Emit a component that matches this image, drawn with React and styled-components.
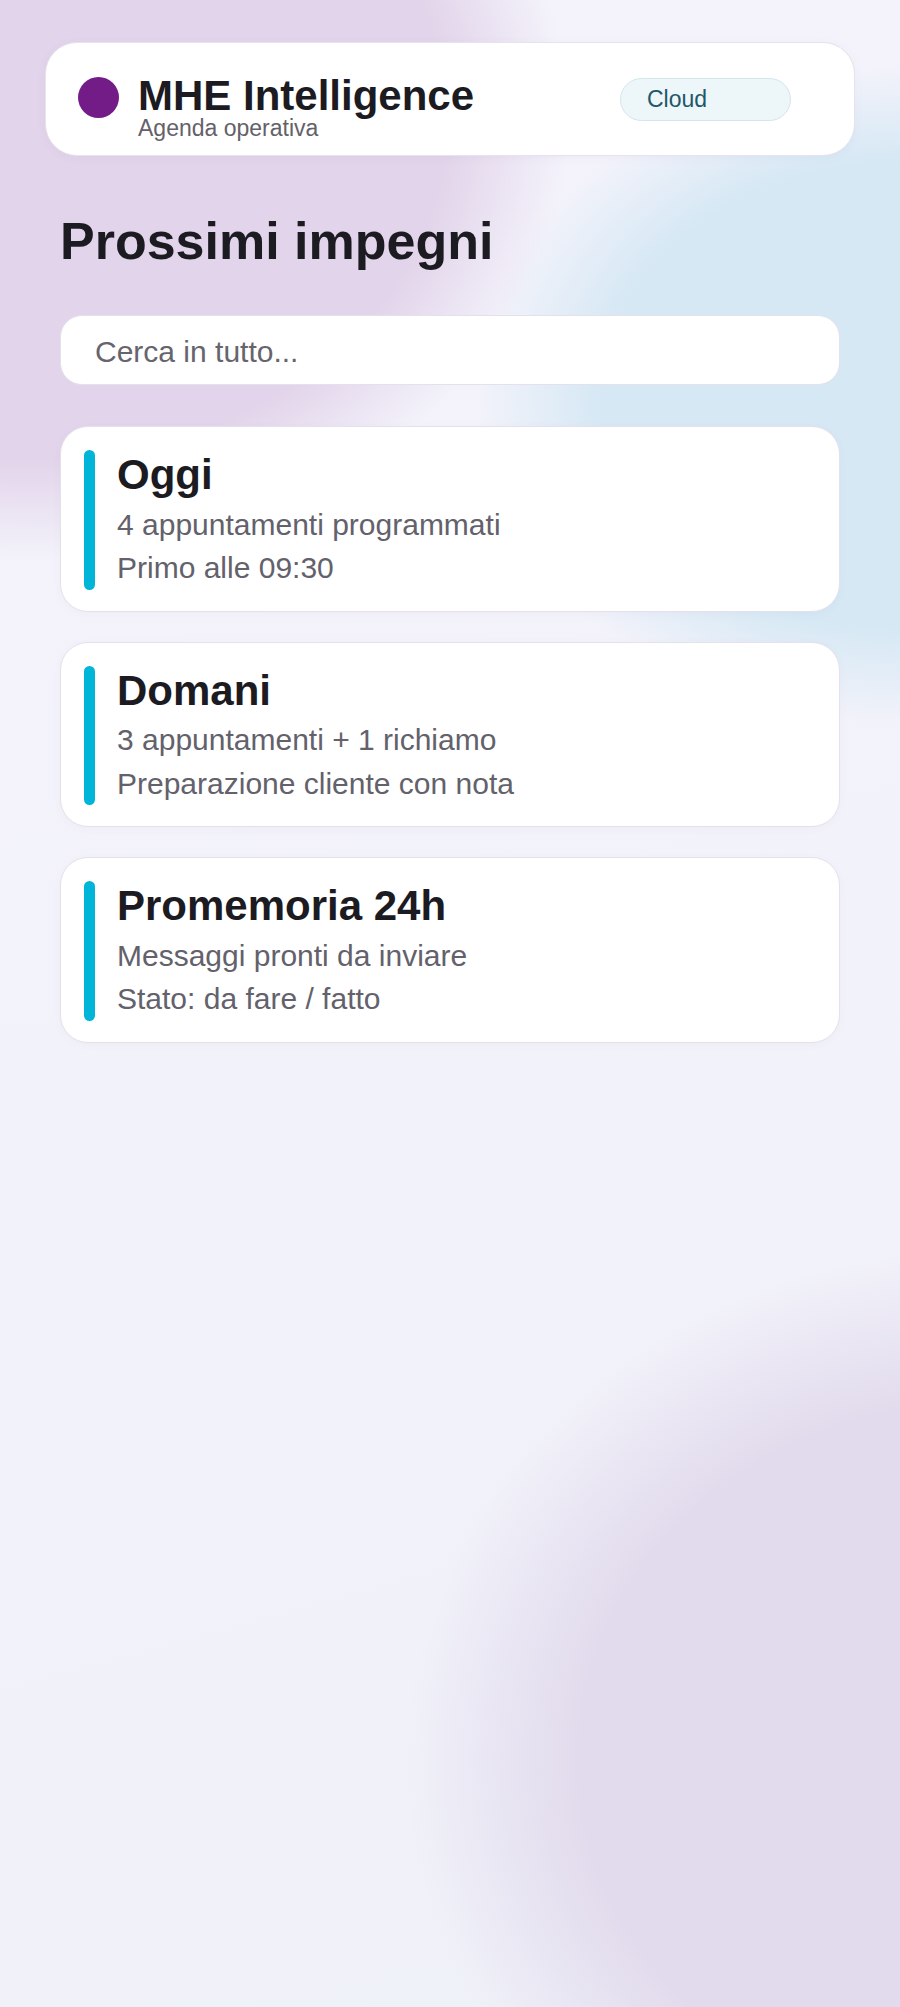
import React from "react";
import styled, { createGlobalStyle } from "styled-components";

const Global = createGlobalStyle`
  html, body { margin: 0; padding: 0; }
  body { font-family: "Liberation Sans", Arial, sans-serif; background: #f2f2fa; }
  * { box-sizing: border-box; }
`;

const Page = styled.div`
  min-height: 2007px;
  padding: 42px 45px 60px;
  background:
    radial-gradient(ellipse 540px 440px at 30px 120px, rgba(226, 212, 234, 1) 0%, rgba(226, 212, 234, 1) 77%, rgba(226, 212, 234, 0) 100%),
    radial-gradient(ellipse 430px 330px at 905px 395px, rgba(213, 232, 244, 1) 0%, rgba(213, 232, 244, 1) 70%, rgba(213, 232, 244, 0) 100%),
    radial-gradient(ellipse 580px 510px at 985px 1760px, rgba(226, 219, 237, 1) 0%, rgba(226, 219, 237, 1) 70%, rgba(226, 219, 237, 0) 100%),
    linear-gradient(165deg, #f4f3fb 0%, #f2f2fa 60%, #eff1f8 100%);
`;

const Header = styled.header`
  display: flex;
  align-items: flex-start;
  height: 114px;
  padding: 32px 63px 10px 32px;
  background: #ffffff;
  border: 1px solid #e6e2ee;
  border-radius: 32px;
  box-shadow: 0 2px 10px rgba(120, 100, 150, 0.05);
`;

const Brand = styled.div`
  display: flex;
  align-items: flex-start;
  gap: 19px;
`;

const Dot = styled.span`
  width: 41px;
  height: 41px;
  margin-top: 2px;
  border-radius: 50%;
  background: #731b86;
  flex: none;
`;

const BrandText = styled.div`
  display: flex;
  flex-direction: column;
`;

const BrandName = styled.div`
  font-size: 42px;
  line-height: 1;
  font-weight: 700;
  color: #1c1b22;
`;

const BrandSub = styled.div`
  margin-top: -2px;
  font-size: 23px;
  line-height: 1.2;
  color: #636169;
`;

const Pill = styled.span`
  margin-left: auto;
  margin-top: 3px;
  width: 171px;
  height: 43px;
  display: flex;
  align-items: center;
  padding-left: 26px;
  font-size: 23px;
  color: #1f5868;
  background: #edf6f9;
  border: 1px solid #d3e6ed;
  border-radius: 22px;
`;

const Main = styled.main`
  padding: 0 15px;
  display: flex;
  flex-direction: column;
`;

const Title = styled.h1`
  margin: 54px 0 0;
  font-size: 52px;
  line-height: 1.2;
  font-weight: 700;
  color: #1c1b22;
`;

const Search = styled.input`
  margin-top: 43px;
  height: 70px;
  width: 100%;
  padding: 4px 34px 0;
  font-family: "Liberation Sans", Arial, sans-serif;
  font-size: 30px;
  color: #1c1b22;
  background: #ffffff;
  border: 1px solid #e4e0ec;
  border-radius: 22px;
  outline: none;
  &::placeholder { color: #66646d; }
`;

const List = styled.div`
  margin-top: 41px;
  display: flex;
  flex-direction: column;
  gap: 30px;
`;

const Card = styled.div`
  display: flex;
  gap: 22px;
  padding: 23px 23px 21px;
  background: #ffffff;
  border: 1px solid #e4e0ec;
  border-radius: 28px;
  box-shadow: 0 2px 8px rgba(120, 100, 150, 0.04);
`;

const Accent = styled.span`
  width: 11px;
  flex: none;
  border-radius: 6px;
  background: ${(p) => p.$color || "#00b5d8"};
`;

const CardBody = styled.div`
  display: flex;
  flex-direction: column;
`;

const CardTitle = styled.div`
  font-size: 42px;
  line-height: 1.2;
  font-weight: 700;
  color: #1c1b22;
  margin-bottom: 2px;
`;

const CardLine = styled.div`
  font-size: 30px;
  line-height: 1.45;
  color: #63616b;
`;

const items = [
  { title: "Oggi", lines: ["4 appuntamenti programmati", "Primo alle 09:30"] },
  { title: "Domani", lines: ["3 appuntamenti + 1 richiamo", "Preparazione cliente con nota"] },
  { title: "Promemoria 24h", lines: ["Messaggi pronti da inviare", "Stato: da fare / fatto"] },
];

export default function App() {
  return (
    <>
      <Global />
      <Page>
        <Header>
          <Brand>
            <Dot />
            <BrandText>
              <BrandName>MHE Intelligence</BrandName>
              <BrandSub>Agenda operativa</BrandSub>
            </BrandText>
          </Brand>
          <Pill>Cloud</Pill>
        </Header>
        <Main>
          <Title>Prossimi impegni</Title>
          <Search placeholder="Cerca in tutto..." />
          <List>
            {items.map((it) => (
              <Card key={it.title}>
                <Accent />
                <CardBody>
                  <CardTitle>{it.title}</CardTitle>
                  {it.lines.map((l) => (
                    <CardLine key={l}>{l}</CardLine>
                  ))}
                </CardBody>
              </Card>
            ))}
          </List>
        </Main>
      </Page>
    </>
  );
}
